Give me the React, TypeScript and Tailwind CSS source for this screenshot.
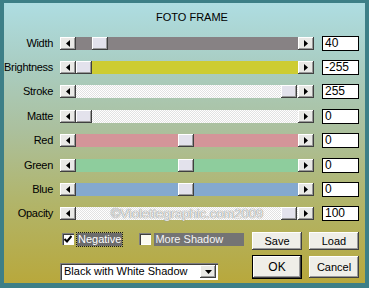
import React from "react";

type Row = {
  label: string;
  value: string;
  track: string;
  thumb: number;
  mark?: boolean;
};

const dots =
  "bg-[repeating-conic-gradient(#e2e2e2_0_25%,#ffffff_0_50%)] bg-[length:2px_2px]";

const rows: Row[] = [
  { label: "Width", value: "40", track: "bg-[#878284]", thumb: 17 },
  { label: "Brightness", value: "-255", track: "bg-[#cdcc32]", thumb: 1 },
  { label: "Stroke", value: "255", track: dots, thumb: 206 },
  { label: "Matte", value: "0", track: dots, thumb: 1 },
  { label: "Red", value: "0", track: "bg-[#d49599]", thumb: 103 },
  { label: "Green", value: "0", track: "bg-[#8ecd9d]", thumb: 103 },
  { label: "Blue", value: "0", track: "bg-[#84a9cf]", thumb: 103 },
  { label: "Opacity", value: "100", track: dots, thumb: 206, mark: true },
];

const raised =
  "shadow-[inset_-1px_-1px_#404040,inset_1px_1px_#ffffff,inset_-2px_-2px_#9a9a9a]";
const sunken =
  "shadow-[inset_1px_1px_#808080,inset_2px_2px_#404040,inset_-1px_-1px_#ffffff]";

function Arrow({ dir }: { dir: "left" | "right" }) {
  return (
    <div
      className={`w-[16px] h-[13px] bg-[#e9e9e6] ${raised} flex items-center justify-center`}
    >
      <svg width="4" height="7" viewBox="0 0 4 7">
        {dir === "left" ? (
          <path d="M4 0 L0 3.5 L4 7 Z" fill="#000" />
        ) : (
          <path d="M0 0 L4 3.5 L0 7 Z" fill="#000" />
        )}
      </svg>
    </div>
  );
}

function Slider({ row }: { row: Row }) {
  return (
    <div className="flex w-[254px] h-[13px]">
      <Arrow dir="left" />
      <div className={`relative flex-1 h-[13px] ${row.track} flex items-center justify-center`}>
        {row.mark && (
          <span className="text-[13px] leading-none text-[#ececec] [text-shadow:0_0_1px_#8c8c8c,0_0_1px_#8c8c8c]">
            ©Violettegraphic.com2009
          </span>
        )}
        <div
          className={`absolute top-0 w-[16px] h-[13px] bg-[#e3e2ec] ${raised}`}
          style={{ left: row.thumb - 1 }}
        />
      </div>
      <Arrow dir="right" />
    </div>
  );
}

function Button({ children, wide }: { children: React.ReactNode; wide?: boolean }) {
  return (
    <div
      className={`w-[50px] ${wide ? "h-[22px]" : "h-[18px]"} bg-[#efeee8] ${raised} flex items-center justify-center text-[11px] text-black`}
    >
      {children}
    </div>
  );
}

export default function App() {
  return (
    <div className="w-[369px] h-[288px] font-[Liberation_Sans,Arial,sans-serif] text-black border-l-[4px] border-r-[4px] border-t-[3px] border-b-[5px] border-[#3d7f87] bg-[linear-gradient(180deg,#aedde2_0%,#a9cdc2_22%,#abc09e_45%,#b1b56c_70%,#b8a83c_100%)] select-none">
      {/* TITLE */}
      <div className="pt-[8px] pl-[15px] text-center text-[11px] leading-[13px]">
        FOTO FRAME
      </div>

      {/* SLIDERS */}
      <div className="mt-[7px]">
        {rows.map((r) => (
          <div key={r.label} className="flex items-center h-[24.4px]">
            <div className="w-[49px] text-right text-[11px] tracking-[-0.3px] leading-[13px] whitespace-nowrap">
              {r.label}
            </div>
            <div className="ml-[7px]">
              <Slider row={r} />
            </div>
            <div className="ml-[8px] w-[37px] h-[15px] bg-white border border-black text-[12px] leading-[13px] pl-[2px]">
              {r.value}
            </div>
          </div>
        ))}
      </div>

      {/* CHECKBOXES + SAVE/LOAD */}
      <div className="flex mt-[5px] h-[19px]">
        <div className="ml-[58px] mt-[2px] flex items-center h-[12px] text-[11px]">
          <div className={`w-[12px] h-[12px] bg-white ${sunken} flex items-center justify-center`}>
            <svg width="8" height="8" viewBox="0 0 8 8">
              <path d="M0.5 4 L3 6.5 L7.5 1" stroke="#000" strokeWidth="2" fill="none" />
            </svg>
          </div>
          <div className="ml-[3px] px-[1px] h-[13px] leading-[12px] bg-[#6c6c6c] text-white outline-1 outline-dotted outline-[#1a1a1a]">
            Negative
          </div>
          <div className={`ml-[17px] w-[12px] h-[12px] bg-[#fbfaf0] ${sunken}`} />
          <div className="ml-[3px] w-[90px] pl-[1px] h-[13px] leading-[12px] bg-[#747474] text-[#f4f4f4]">
            More Shadow
          </div>
        </div>
        <div className="ml-auto mr-[6px] mt-[1px] flex gap-[7px]">
          <Button>Save</Button>
          <Button>Load</Button>
        </div>
      </div>

      {/* DROPDOWN + OK/CANCEL */}
      <div className="flex mt-[5px] h-[24px]">
        <div className={`ml-[56px] mt-[8px] w-[158px] h-[17px] bg-white ${sunken} flex items-center justify-between pl-[4px] pr-[2px] text-[11px]`}>
          <span>Black with White Shadow</span>
          <div className={`w-[16px] h-[13px] bg-[#e9e9e6] ${raised} flex items-center justify-center`}>
            <svg width="7" height="4" viewBox="0 0 7 4">
              <path d="M0 0 L7 0 L3.5 4 Z" fill="#000" />
            </svg>
          </div>
        </div>
        <div className="ml-auto mr-[6px] flex gap-[7px] items-start">
          <div className="w-[50px] h-[24px] border border-black">
            <div className={`w-full h-full bg-[#efeee8] ${raised} flex items-center justify-center text-[12px]`}>
              OK
            </div>
          </div>
          <div className="mt-[1px]">
            <Button wide>Cancel</Button>
          </div>
        </div>
      </div>
    </div>
  );
}
